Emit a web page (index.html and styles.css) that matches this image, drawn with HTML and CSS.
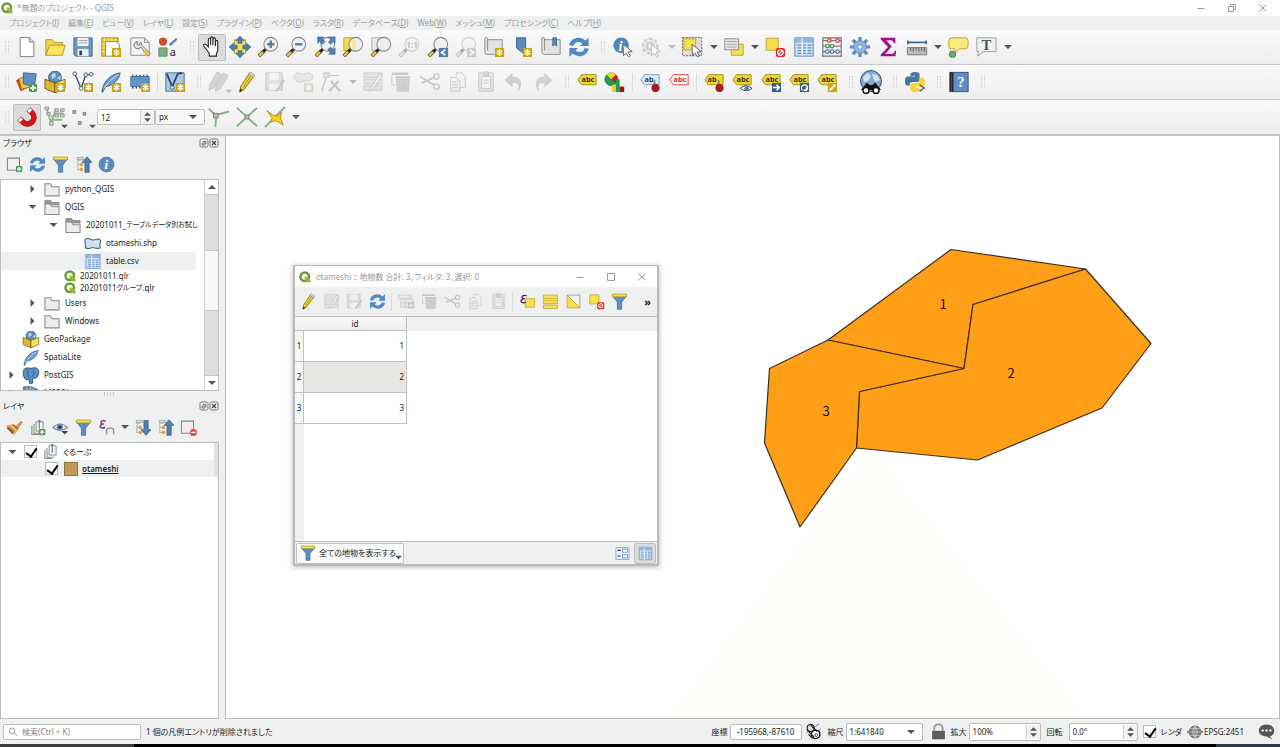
FILE: index.html
```html
<!DOCTYPE html>
<html lang="ja">
<head>
  <meta charset="utf-8">
  <title>*無題のプロジェクト - QGIS</title>
  <meta name="viewport" content="width=device-width, initial-scale=1">
  <link rel="stylesheet" href="styles.css">
</head>
<body>

<!-- icon set -->
<svg class="sprite" aria-hidden="true">
  <defs>
    <g id="star"><rect x="13" y="13" width="10" height="10" rx="1" fill="#c9a40e"/><path d="M18 14.500v7M15 16.200l6 3.600M21 16.200l-6 3.600" stroke="#fff" stroke-width="1.800"/></g>
    <g id="plus"><rect x="14" y="14" width="9" height="9" rx="2" fill="#4c9a55"/><path d="M18.500 15.500v6M15.500 18.500h6" stroke="#fff" stroke-width="2"/></g>
    <g id="lens"><path d="M2 22l6-6" stroke="#555" stroke-width="4"/><path d="M2.500 21.500l4-4" stroke="#f0c93a" stroke-width="2.500"/><path d="M7 17l3-3" stroke="#222" stroke-width="3"/><circle cx="15" cy="9" r="7.500" fill="#eef1ef" fill-opacity=".9" stroke="#888" stroke-width="1.200"/></g>
    <g id="cursor"><path d="M12 9l10 8-4.500.5 2.500 4-2 1.200-2.500-4-3 2.800z" fill="#fff" stroke="#555"/></g>
    <g id="ball"><path d="M17 10v6" stroke="#888" stroke-width="2"/><circle cx="18" cy="18.500" r="4.500" fill="#a31f1f"/></g>
    <g id="no"><rect x="13" y="13" width="10" height="10" rx="2" fill="#e02a2a"/><circle cx="18" cy="18" r="3" fill="none" stroke="#fff" stroke-width="1.300"/><path d="M16 20l4-4" stroke="#fff" stroke-width="1.300"/></g>
    <g id="tag"><path d="M2 9.500L6 4h16v11H6z" fill="#f2d52b" stroke="#a58c12"/></g>
    <g id="sheets"><path d="M10 4h10v13H10z" fill="#f2f2f2" stroke="#888" stroke-width="1.300"/><path d="M7 7v13h10M4 10v12h10" fill="none" stroke="#888" stroke-width="1.500"/><path d="M14.500 1v13M12.500 3h4" stroke="#5580a8" stroke-width="1.600"/></g>
    <g id="treelines"><path d="M4 3v17M4 6h5M4 12h5M4 19h5" stroke="#999" fill="none"/><path d="M3 2h9v3H3z" fill="#ddd" stroke="#999"/><circle cx="9" cy="12" r="2.500" fill="#f29a1c"/><circle cx="9" cy="19" r="2.500" fill="#f29a1c"/></g>
  </defs>
  <symbol id="qgis" viewBox="0 0 24 24"><circle cx="11.500" cy="11.500" r="8.500" fill="none" stroke="#6a9c33" stroke-width="5"/><path d="M12 12h5l6 7v4h-5l-6-6z" fill="#8dbb3c"/><path d="M11 11h5l-1 4-4 1z" fill="#ee9a3a"/></symbol>
  <symbol id="new" viewBox="0 0 24 24"><path d="M4.500 1.500h10l5 5v16h-15z" fill="#fff" stroke="#777"/><path d="M14.500 1.500v5h5" fill="#ddd" stroke="#777"/></symbol>
  <symbol id="open" viewBox="0 0 24 24"><path d="M2 21V4h7l2 3h9v4" fill="#f2d544" stroke="#b5951b"/><path d="M2 21l4-11h17l-3 11z" fill="#fae364" stroke="#b5951b"/></symbol>
  <symbol id="save" viewBox="0 0 24 24"><path d="M2 2h20v20H4l-2-2z" fill="#6b95c0" stroke="#4d6a88"/><path d="M6 2h12v9H6z" fill="#f4f4f4"/><path d="M7.500 5h9M7.500 7.500h9" stroke="#999"/><path d="M6 14h12v8H6z" fill="#eee"/><path d="M8 16h3v5H8z" fill="#444"/></symbol>
  <symbol id="layout" viewBox="0 0 24 24"><path d="M6 5h10l5 4v13H6z" fill="#fff" stroke="#888"/><path d="M2 2h18v4H6v16H2z" fill="#e7c73a" stroke="#a98c1c"/><path d="M5 3v2M9 3v2M13 3v2M17 3v2M3 9h2M3 13h2M3 17h2" stroke="#fff"/><use href="#star"/></symbol>
  <symbol id="manager" viewBox="0 0 24 24"><path d="M2 2h15l5 5v14H2z" fill="#f2f3f3" stroke="#888"/><path d="M17 2v5h5" fill="none" stroke="#888"/><path d="M9 6a4 4 0 1 0 4 6l8 10 2-3-9-9-1-3-2 3-2-1z" fill="#e6e6e6" stroke="#666"/><path d="M16 16l5 5" stroke="#e4bb24" stroke-width="3"/></symbol>
  <symbol id="style" viewBox="0 0 24 24"><circle cx="6.500" cy="6" r="4.500" fill="#cd5024"/><path d="M13 9l8-7 1 2-7 7z" fill="#4f86bd"/><path d="M2 13h9v9H2z" fill="#7fb283" stroke="#5a8a60"/><text x="14" y="22" font-size="12" fill="#222">a</text></symbol>
  <symbol id="hand" viewBox="0 0 24 24"><path d="M9 22v-3l-6-8c-1-2 1-3 2.500-1.500L8 12V4c0-2 2.500-2 2.500 0v6V2.500c0-2 2.500-2 2.500 0V10l.2-6.500c0-2 2.500-2 2.500 0V11l.3-5c0-1.800 2.300-1.800 2.300 0v10l-1.500 3v3z" fill="#fff" stroke="#222" stroke-width="1.200"/></symbol>
  <symbol id="pansel" viewBox="0 0 24 24"><path d="M6 4h12v15H6z" fill="#f6e04c" stroke="#baa02a"/><path d="M12 0l4.500 5H14v3h-4V5H7.500zM12 24l4.500-5H14v-3h-4v3H7.500zM0 12l5-4.500V10h4v4H5v2.500zM24 12l-5-4.500V10h-4v4h4v2.500z" fill="#4c80b5" stroke="#335d85" stroke-width=".6"/></symbol>
  <symbol id="zoomin" viewBox="0 0 24 24"><use href="#lens"/><path d="M15 5v8M11 9h8" stroke="#4c80b5" stroke-width="2.600"/></symbol>
  <symbol id="zoomout" viewBox="0 0 24 24"><use href="#lens"/><path d="M11 9h8" stroke="#4c80b5" stroke-width="2.600"/></symbol>
  <symbol id="full" viewBox="0 0 24 24"><use href="#lens"/><path d="M4 1h7L9 3l3 3-3 3-3-3-2 2zM23 1v7l-2-2-3 3-2-2 2-3-2-3zM23 20h-7l2-2-3-3 3-3 3 3 2-2z" fill="#4c80b5" stroke="#335d85" stroke-width=".6"/></symbol>
  <symbol id="zoomsel" viewBox="0 0 24 24"><path d="M2 2h12v14H2z" fill="#f6e04c" stroke="#baa02a"/><use href="#lens"/><path d="M10 4h5v11h-4z" fill="#f6e8a0"/></symbol>
  <symbol id="zoomlayer" viewBox="0 0 24 24"><path d="M2 2h12v14H2z" fill="#e9ebe9" stroke="#aaa"/><use href="#lens"/></symbol>
  <symbol id="native" viewBox="0 0 24 24"><use href="#lens"/><text x="9" y="13" font-size="9" font-weight="bold" fill="#555">1:1</text></symbol>
  <symbol id="last" viewBox="0 0 24 24"><use href="#lens"/><path d="M13 13h10v10H13z" fill="#4c80b5"/><path d="M20 15l-4 3 4 3" fill="none" stroke="#fff" stroke-width="2"/></symbol>
  <symbol id="next" viewBox="0 0 24 24"><use href="#lens"/><path d="M13 13h10v10H13z" fill="#888"/><path d="M16 15l4 3-4 3" fill="none" stroke="#fff" stroke-width="2"/></symbol>
  <symbol id="mapview" viewBox="0 0 24 24"><path d="M5 4h16v16H4c-2 0-2-3-2-4V3c0-2 3-2 3 0v13" fill="#e2e4e2" stroke="#888"/><use href="#star"/></symbol>
  <symbol id="bookmark" viewBox="0 0 24 24"><path d="M6 2h10v19l-5-4-5-4z" fill="#5b8bbd" stroke="#3f6288"/><use href="#star"/></symbol>
  <symbol id="bookmarks" viewBox="0 0 24 24"><path d="M5 4h17v16H4c-2 0-2-3-2-4V3c0-2 3-2 3 0v13" fill="#e2e4e2" stroke="#888"/><path d="M14 2h4v9l-2-2-2 2z" fill="#5b8bbd" stroke="#3f6288"/></symbol>
  <symbol id="refresh" viewBox="0 0 24 24"><path d="M3.500 10.500C5 4 13 2 18 7M20.500 13.500C19 20 11 22 6 17" fill="none" stroke="#4f88c4" stroke-width="4.500"/><path d="M22.500 1.500v9.500H13zM1.500 22.500V13H11z" fill="#4f88c4"/></symbol>
  <symbol id="info" viewBox="0 0 24 24"><circle cx="10" cy="10" r="8.500" fill="#4f86bd"/><text x="7" y="16" font-family="Liberation Serif" font-style="italic" font-weight="bold" font-size="16" fill="#fff">i</text><use href="#cursor"/></symbol>
  <symbol id="about" viewBox="0 0 24 24"><circle cx="12" cy="12" r="10.500" fill="#5a8cc0" stroke="#41709e"/><text x="9" y="18" font-family="Liberation Serif" font-style="italic" font-weight="bold" font-size="18" fill="#fff">i</text></symbol>
  <symbol id="action" viewBox="0 0 24 24"><circle cx="11" cy="11" r="8" fill="#ddd" stroke="#888" stroke-width="2.500" stroke-dasharray="4 2"/><circle cx="11" cy="11" r="5" fill="#888"/><path d="M9.500 8l5 3-5 3z" fill="#fff"/><use href="#cursor"/></symbol>
  <symbol id="select" viewBox="0 0 24 24"><path d="M1.500 1.500h21v20h-21z" fill="#ddd" stroke="#555" stroke-dasharray="2 1.500"/><path d="M3 3h13v12H3z" fill="#f6e04c" stroke="#baa02a"/><use href="#cursor"/></symbol>
  <symbol id="selform" viewBox="0 0 24 24"><path d="M9 9h13v12H9z" fill="#f6e04c" stroke="#baa02a"/><path d="M2 3h15v12H2z" fill="#e6e8e8" stroke="#888"/><path d="M4 6h11M4 9h11M4 12h11" stroke="#999"/></symbol>
  <symbol id="deselect" viewBox="0 0 24 24"><path d="M2.500 2.500h13v13h-13z" fill="#f6e04c" stroke="#baa02a"/><use href="#no"/></symbol>
  <symbol id="table" viewBox="0 0 24 24"><path d="M2 2h20v20H2z" fill="#cfe0f2" stroke="#7ba3cf" stroke-width="1.500"/><path d="M2 2h20v5H2z" fill="#8db4dc"/><path d="M5 10h4M11 10h3M16 10h4M5 13h4M11 13h3M16 13h4M5 16h4M11 16h3M16 16h4M5 19h4M11 19h3M16 19h4" stroke="#5f8dbd" stroke-width="1.300"/><path d="M10 2v20" stroke="#fff"/></symbol>
  <symbol id="abacus" viewBox="0 0 24 24"><path d="M2 22V2h20v20M2 5h20M2 11h20M2 17h20M1 22h22" fill="none" stroke="#777" stroke-width="1.300"/><g stroke-width="1.300"><g fill="#f7d8d8" stroke="#d33"><circle cx="9" cy="5" r="2"/><circle cx="18" cy="5" r="2"/></g><g fill="#d8f0d8" stroke="#484"><circle cx="7" cy="11" r="2"/><circle cx="12" cy="11" r="2"/></g><g fill="#dde8f5" stroke="#47a"><circle cx="7" cy="17" r="2"/><circle cx="12" cy="17" r="2"/><circle cx="18" cy="17" r="2"/></g></g></symbol>
  <symbol id="gear" viewBox="0 0 24 24"><path d="M12 1v22M1 12h22M4.200 4.200l15.600 15.600M19.800 4.200L4.200 19.800" stroke="#5b8bbd" stroke-width="3.500"/><circle cx="12" cy="12" r="7" fill="#8bb5e2" stroke="#5b8bbd"/><circle cx="12" cy="12" r="2.500" fill="#fff" stroke="#5b8bbd"/></symbol>
  <symbol id="sigma" viewBox="0 0 24 24"><path d="M4 2h16v6h-1.500c-.5-2.500-1.500-3.500-4-3.500H10l6 7-7 8h6.500c2.500 0 3.500-1.500 4-3.500H21l-1 6H4v-1.500L12 12 4 3.500z" fill="#a0108f"/></symbol>
  <symbol id="ruler" viewBox="0 0 24 24"><path d="M2 7h20M2 5v4M22 5v4" stroke="#3f678f" stroke-width="1.800"/><path d="M1.500 12.500h21v8h-21z" fill="#bbb" stroke="#777"/><path d="M5 13v3M8 13v4M11 13v3M14 13v4M17 13v3M20 13v4" stroke="#555"/></symbol>
  <symbol id="tip" viewBox="0 0 24 24"><path d="M5 2h15q3 0 3 3v6q0 3-3 3h-7l-5 6 1-6H5q-3 0-3-3V5q0-3 3-3z" fill="#f9ec7c" stroke="#b79f31"/><circle cx="6" cy="20" r="3.500" fill="#74a578" stroke="#447a4c"/></symbol>
  <symbol id="textann" viewBox="0 0 24 24"><path d="M2 2h21v15H9l-6 5 1-5H2z" fill="#edf3f5" stroke="#999"/><text x="7" y="15" font-family="Liberation Serif" font-weight="bold" font-size="16" fill="#555">T</text></symbol>

  <symbol id="source" viewBox="0 0 24 24"><path d="M0 10l10-5 6 12-11 5z" fill="#c4461c"/><path d="M3 8l11-3 3 12-11 3z" fill="#e9c73a" stroke="#8a6d10" stroke-width=".6"/><path d="M8 2l14 1-2 14-12-3z" fill="#5e8fc4" stroke="#3f6288"/><use href="#plus"/></symbol>
  <symbol id="gpkg" viewBox="0 0 24 24"><circle cx="12" cy="7" r="7" fill="#5f8fb9" stroke="#365b7d"/><path d="M8 4l4-2 1 4-4 3zM14 8l4-3v5z" fill="#b9d3e6"/><path d="M1 9l11 4v11L1 19z" fill="#e0b72b" stroke="#4e3b08" stroke-width=".8"/><path d="M12 13l11-4v10l-11 5z" fill="#f7dd60" stroke="#4e3b08" stroke-width=".8"/></symbol>
  <symbol id="gpkgnew" viewBox="0 0 24 24"><use href="#gpkg"/><use href="#star"/></symbol>
  <symbol id="shpnew" viewBox="0 0 24 24"><path d="M3 3l7 16 5-15h6" fill="none" stroke="#34506c" stroke-width="1.500"/><g fill="#fff" stroke="#34506c"><circle cx="3" cy="3" r="2"/><circle cx="10" cy="19" r="2"/><circle cx="15" cy="4" r="2"/><circle cx="21" cy="3.500" r="2"/></g><use href="#star"/></symbol>
  <symbol id="feather" viewBox="0 0 24 24"><path d="M2 23c1-9 7-19 20-21-1 8-8 14-16 15l-3 6z" fill="#6c9bd0" stroke="#355a80"/><path d="M4 19C9 12 14 7 20 4" stroke="#dceaf7" fill="none"/></symbol>
  <symbol id="feathernew" viewBox="0 0 24 24"><use href="#feather"/><use href="#star"/></symbol>
  <symbol id="chip" viewBox="0 0 24 24"><path d="M4 4v15M8 4v15M12 4v15M16 4v15M20 4v15" stroke="#444" stroke-width="1.500"/><path d="M2 6h20v11H2z" fill="#5f93cc" stroke="#3f6f9f"/><use href="#star"/></symbol>
  <symbol id="virtual" viewBox="0 0 24 24"><path d="M2 2h20v20H2z" fill="#a9c7e6" stroke="#3f678f"/><path d="M3 3l6 14 6-14M15 3l5-1" fill="none" stroke="#2b4a69" stroke-width="2"/><circle cx="9" cy="18" r="2" fill="#fff" stroke="#2b4a69"/><use href="#star"/></symbol>
  <symbol id="edits" viewBox="0 0 24 24"><path d="M1 21l1-6L10 1l5 3-8 14zM8 22l1-6 8-14 5 3-8 14z" fill="#999" stroke="#777"/></symbol>
  <symbol id="pencil" viewBox="0 0 24 24"><path d="M4 23l1-6L15 2l5 3L9 20z" fill="#f1d034" stroke="#7d6712"/><path d="M4 23l.7-4 2.500 1.700z" fill="#222"/><path d="M8 18L17 4" stroke="#a88b1a"/><path d="M14 3.500l1.500-2.500 5 3L19 6.500z" fill="#ddd" stroke="#777" stroke-width=".6"/></symbol>
  <symbol id="savee" viewBox="0 0 24 24"><path d="M2 2h18v19H2z" fill="#bbb" stroke="#777"/><path d="M6 2h10v8H6zM6 14h11v7H6z" fill="#f2f2f2"/><path d="M12 22l9-13 2 2-8 11z" fill="#777"/></symbol>
  <symbol id="addpoly" viewBox="0 0 24 24"><path d="M4 3c4-3 5 1 9 0s8-2 9 2-2 7-6 6-5 2-9 1-7-6-3-9z" fill="#ccc" stroke="#888"/><use href="#star"/></symbol>
  <symbol id="vertex" viewBox="0 0 24 24"><path d="M1 22L6 5h14" fill="none" stroke="#777" stroke-width="1.500"/><path d="M3 2h6v5H3z" fill="#bbb" stroke="#777"/><path d="M9 22l10-11M11 11l10 11" stroke="#777" stroke-width="2.500"/></symbol>
  <symbol id="multi" viewBox="0 0 24 24"><path d="M2 2h20v5H2zM2 9h20v5H2zM2 16h20v5H2z" fill="#cfc8a6" stroke="#888"/><path d="M8 22L19 3l3 2-11 16z" fill="#eee" stroke="#777"/></symbol>
  <symbol id="trash" viewBox="0 0 24 24"><path d="M2 3h18M6 7h16" stroke="#777" stroke-width="2.500"/><path d="M7 9h14l-1 13H8z" fill="#bb8f8a" stroke="#777"/><path d="M11 11v9M14 11v9M17 11v9M2 5v10h4" stroke="#777" fill="none"/></symbol>
  <symbol id="cut" viewBox="0 0 24 24"><path d="M1 6l15 9M3 13l14-6" stroke="#777" stroke-width="2"/><circle cx="19" cy="6" r="3" fill="none" stroke="#777" stroke-width="1.500"/><circle cx="19" cy="17" r="3" fill="none" stroke="#777" stroke-width="1.500"/></symbol>
  <symbol id="copy" viewBox="0 0 24 24"><path d="M10 2h6l4 4v12H10z" fill="#eee" stroke="#777"/><path d="M4 7h6l4 4v11H4z" fill="#eee" stroke="#777"/><path d="M6 12h6M6 15h6M6 18h6" stroke="#777"/></symbol>
  <symbol id="paste" viewBox="0 0 24 24"><path d="M4 2h16v20H4z" fill="#ccc" stroke="#777"/><path d="M7 6h10v13H7z" fill="#f5f5f5" stroke="#777"/><path d="M9 1h6v4H9zM9 10h6M9 13h6" fill="#999" stroke="#777"/></symbol>
  <symbol id="undo" viewBox="0 0 24 24"><path d="M2 10l8-7v4c9-1 12 6 7 14 2-7-2-9-7-8v4z" fill="#a08c78" stroke="#888"/></symbol>
  <symbol id="redo" viewBox="0 0 24 24"><path d="M22 10l-8-7v4C5 6 2 13 7 21c-2-7 2-9 7-8v4z" fill="#8c9a88" stroke="#888"/></symbol>
  <symbol id="label" viewBox="0 0 24 24"><use href="#tag"/><text x="6" y="12" font-size="8" font-weight="bold" fill="#333">abc</text></symbol>
  <symbol id="chart" viewBox="0 0 24 24"><circle cx="8" cy="9" r="7" fill="#1aa14a" stroke="#333" stroke-width=".6"/><path d="M8 9L3 4a7 7 0 0 1 10 0z" fill="#f2d52b"/><path d="M8 9l5-5a7 7 0 0 1 0 10z" fill="#d11f1f"/><path d="M9 15h4v8H9z" fill="#f2c92b"/><path d="M13 9h4v14h-4z" fill="#1aa14a"/><path d="M17 17h5v6h-5z" fill="#a31616"/></symbol>
  <symbol id="labelpin" viewBox="0 0 24 24"><path d="M2 9.500L6 4h16v11H6z" fill="#dceafa" stroke="#6d9bd0"/><text x="6" y="12" font-size="8" font-weight="bold" fill="#345">ab</text><use href="#ball"/></symbol>
  <symbol id="labelred" viewBox="0 0 24 24"><path d="M2 9.500L6 4h16v11H6z" fill="#fff" stroke="#e33"/><text x="6" y="12" font-size="8" font-weight="bold" fill="#d22">abc</text></symbol>
  <symbol id="labelball" viewBox="0 0 24 24"><use href="#tag"/><text x="5" y="12" font-size="8" font-weight="bold" fill="#333">ab</text><use href="#ball"/></symbol>
  <symbol id="labeleye" viewBox="0 0 24 24"><use href="#label"/><path d="M10 19q6-6 13 0-6 5-13 0z" fill="#fff" stroke="#333"/><circle cx="17" cy="19" r="2.500" fill="#4c80b5"/></symbol>
  <symbol id="labelmove" viewBox="0 0 24 24"><use href="#label"/><path d="M13 13h10v10H13z" fill="#3e5f80"/><path d="M14 18h7M18 15l3 3-3 3" fill="none" stroke="#fff" stroke-width="1.800"/></symbol>
  <symbol id="labelrot" viewBox="0 0 24 24"><use href="#label"/><path d="M13 13h10v10H13z" fill="#3e5f80"/><path d="M16 21a3.300 3.300 0 1 1 4 0M20 18v3h-3" fill="none" stroke="#fff" stroke-width="1.400"/></symbol>
  <symbol id="labeledit" viewBox="0 0 24 24"><use href="#label"/><path d="M13 13h10v10H13z" fill="#d0a811"/><path d="M15 21l6-6" stroke="#fff" stroke-width="2"/></symbol>
  <symbol id="search" viewBox="0 0 24 24"><circle cx="12" cy="11" r="10.500" fill="#86aace" stroke="#34506c"/><path d="M4 7l5-4 3 3-3 5-4 1zM13 4l5 1 3 5-5 2z" fill="#d5e3ec"/><path d="M8 14l2 2h4l2-2 4 5H4z" fill="#111" stroke="#111" stroke-width="2"/><g fill="#fff" stroke="#111" stroke-width="1.500"><circle cx="7" cy="20.500" r="3"/><circle cx="17" cy="20.500" r="3"/></g></symbol>
  <symbol id="python" viewBox="0 0 24 24"><path d="M7 6V4q0-3 5-3t5 3v5q0 3-3 3H9q-3 0-3 4H4q-3 0-3-5t3-5h8V5z" fill="#4477a6"/><path d="M17 7h2q4 0 4 5t-3 5h-8v1h5v2q0 3-5 3t-5-3v-4q0-3 3-3h5q2 0 2-3z" fill="#f5d437"/><path d="M17 15l5 3.500-5 3.500" fill="none" stroke="#555" stroke-width="1.500"/></symbol>
  <symbol id="help" viewBox="0 0 24 24"><path d="M2 1.500h20v21H2z" fill="#5f8fc6" stroke="#34506c"/><path d="M2 1.500h4v21H2z" fill="#222"/><path d="M4 3v19" stroke="#999" stroke-dasharray="1 1"/><text x="10" y="17" font-family="Liberation Serif" font-weight="bold" font-size="16" fill="#fff">?</text></symbol>

  <symbol id="magnet" viewBox="0 0 24 24"><path d="M3.500 13.500l4 4a7 7 0 0 0 10-10l-4-4" fill="none" stroke="#8d0f0f" stroke-width="6"/><path d="M4 14l3.500 3.500a7 7 0 0 0 10-10L14 4" fill="none" stroke="#d81515" stroke-width="5"/><path d="M3.800 13.800l2.200 2.200M13.800 3.800l2.200 2.200" stroke="#fff" stroke-width="4.500"/></symbol>
  <symbol id="snapmode" viewBox="0 0 24 24"><path d="M3 3l5 16 5-16M8 12l5-4h8M8 15h12" fill="none" stroke="#8bb88d" stroke-width="2"/><g fill="#ccc" stroke="#888" stroke-width=".8"><path d="M1 1h4v3H1zM3 7h4v3H3zM12 3h4v3h-4zM18 3h4v3h-4zM12 9h4v3h-4zM18 9h4v3h-4zM6 17h4v4H6z"/></g></symbol>
  <symbol id="snaptype" viewBox="0 0 24 24"><path d="M1 5h3v3H1zM12 7h3v3h-3zM7 17h3v3H7z" fill="#bbb" stroke="#777"/></symbol>
  <symbol id="topo" viewBox="0 0 24 24"><path d="M1 3l7 7 15-4M9 10l-1 13" fill="none" stroke="#7cb582" stroke-width="2"/><path d="M6 8h5v5H6z" fill="#bbb" stroke="#777"/></symbol>
  <symbol id="inter" viewBox="0 0 24 24"><path d="M1 2l22 20M23 2L1 22" stroke="#7cb582" stroke-width="2"/><path d="M10 10h4v4h-4z" fill="#bbb" stroke="#777"/></symbol>
  <symbol id="trace" viewBox="0 0 24 24"><path d="M23 1L1 23" stroke="#7cb582" stroke-width="2"/><path d="M3 5l7 5 4 1 5-4-1 6 3 8-6-4-3-1-5 2 2-5z" fill="#f5cf21" stroke="#b58b0e"/></symbol>

  <symbol id="adddoc" viewBox="0 0 24 24"><path d="M2 3h17v17H2z" fill="#f0f0f0" stroke="#888" stroke-width="1.500"/><use href="#plus"/></symbol>
  <symbol id="remdoc" viewBox="0 0 24 24"><path d="M2 3h17v17H2z" fill="#f0f0f0" stroke="#888" stroke-width="1.500"/><circle cx="19" cy="19" r="5" fill="#ea4545"/><path d="M16 19h6" stroke="#fff" stroke-width="2"/></symbol>
  <symbol id="filter" viewBox="0 0 24 24"><path d="M2 4h20l-7 9v10H9V13z" fill="#5b8fc6" stroke="#3f6a96"/><path d="M2 1.500h20v4H2z" fill="#f6e04c" stroke="#a3902a"/></symbol>
  <symbol id="collapse" viewBox="0 0 24 24"><use href="#treelines"/><path d="M17 1l7 8h-4v14h-6V9h-4z" fill="#4c80b5" stroke="#335d85"/></symbol>
  <symbol id="expand" viewBox="0 0 24 24"><use href="#treelines"/><path d="M17 23l7-8h-4V2h-6v13h-4z" fill="#4c80b5" stroke="#335d85"/></symbol>
  <symbol id="folder" viewBox="0 0 24 24"><path d="M2 21V4h8l2 4h10v13z" fill="#ededed" stroke="#8a8a8a" stroke-width="1.500"/></symbol>
  <symbol id="folderopen" viewBox="0 0 24 24"><path d="M2 9V2h8l2 3h10v4" fill="#999" stroke="#777"/><path d="M2 22V7h8l2 4h10v11z" fill="#ededed" stroke="#8a8a8a" stroke-width="1.500"/></symbol>
  <symbol id="poly" viewBox="0 0 24 24"><path d="M3 5c5-1 6 3 10 2s6-3 9 0-2 5 0 9-6 3-9 2-4 1-9 1-2-6-3-8 0-5 2-6z" fill="#cfe0f0" stroke="#3f5f80" stroke-width="1.500"/></symbol>
  <symbol id="elephant" viewBox="0 0 24 24"><path d="M1 8C1 0 8 1 12 2c6-2 11-1 11 5 0 4-2 7-4 9l-4-1-1 8h-4l-1-6-4 1C2 16 1 12 1 8z" fill="#5b8fc6" stroke="#2e4d6e" stroke-width="1.300"/><path d="M8 4q-2 5 1 11M15 4q3 4-1 9" fill="none" stroke="#2e4d6e"/></symbol>
  <symbol id="mssql" viewBox="0 0 24 24"><path d="M1 3c8-2 14 0 21 4l-4 16H5z" fill="#5b8fc6" stroke="#2e4d6e"/><path d="M6 3l3 19M11 3l2 19M16 5l1 17" stroke="#dceaf7"/></symbol>
  <symbol id="brush" viewBox="0 0 24 24"><path d="M13 12l8-9 2 2-7 9z" fill="#e09a28" stroke="#a86"/><path d="M1 10l8-2 8 7-6 7z" fill="#f0c22e" stroke="#b85"/><path d="M2 12l8 8" stroke="#d43030" stroke-width="3"/><path d="M10 8l7 6" stroke="#c33" stroke-width="2"/><path d="M5 12l7 6" stroke="#4c80b5" stroke-width="1.500"/></symbol>
  <symbol id="group" viewBox="0 0 24 24"><use href="#sheets"/></symbol>
  <symbol id="groupadd" viewBox="0 0 24 24"><use href="#sheets"/><use href="#plus"/></symbol>
  <symbol id="eye" viewBox="0 0 24 24"><path d="M1 12Q11 2 22 12 11 20 1 12z" fill="#eef3f6" stroke="#889" stroke-width="1.500"/><circle cx="11" cy="11.500" r="4.500" fill="#5b8fc6"/><circle cx="11" cy="11.500" r="2" fill="#223"/><path d="M13 17h10l-5 5z" fill="#444"/></symbol>
  <symbol id="epsfilter" viewBox="0 0 24 24"><path d="M11 3C3 0 2 8 8 7 0 8 2 15 10 12" fill="none" stroke="#74386d" stroke-width="2"/><path d="M12 22v-6q0-3 3-3h4q3 0 3 3v6M12 19v3M22 19v3" fill="none" stroke="#999" stroke-width="2"/></symbol>
  <symbol id="epssel" viewBox="0 0 24 24"><path d="M9 8h13v12H9z" fill="#f6e04c" stroke="#baa02a"/><path d="M11 4C3 1 2 9 8 8 0 9 2 16 10 13" fill="none" stroke="#522a58" stroke-width="2"/></symbol>
  <symbol id="selall" viewBox="0 0 24 24"><path d="M2 3h20v5H2zM2 10h20v5H2zM2 17h20v5H2z" fill="#f6e04c" stroke="#baa02a"/></symbol>
  <symbol id="invert" viewBox="0 0 24 24"><path d="M3 3h18v18z" fill="#f2f2f2" stroke="#888"/><path d="M3 3l18 18H3z" fill="#f6e04c" stroke="#baa02a"/></symbol>
  <symbol id="addfield" viewBox="0 0 24 24"><path d="M1 3h18v5H1zM4 8h17v12H4zM4 14h17M10 8v12" fill="#ddd" stroke="#777"/><path d="M14 13h9v9h-9z" fill="#777"/><path d="M18.500 15v5M16 17.500h5" stroke="#fff" stroke-width="1.500"/></symbol>
  <symbol id="formview" viewBox="0 0 24 24"><path d="M1.500 2.500h21v19h-21z" fill="#e8f0f8" stroke="#8aaed4" stroke-width="1.500"/><path d="M4 7h5M4 16h5" stroke="#345" stroke-width="1.800"/><path d="M12 5h8v5h-8zM12 14h8v5h-8z" fill="#fff" stroke="#6d9bd0" stroke-width="1.500"/></symbol>
  <symbol id="extent" viewBox="0 0 24 24"><path d="M2 14L20 1M9 23L22 8" stroke="#555"/><circle cx="8" cy="7" r="5" fill="#ddd" stroke="#111" stroke-width="1.500"/><circle cx="15" cy="16" r="6" fill="#fff" stroke="#111" stroke-width="2"/><circle cx="16" cy="17" r="2" fill="none" stroke="#111"/><path d="M3 10l10 10M8 3l9 9M5 16l5 5" stroke="#111" stroke-width="1.500"/></symbol>
  <symbol id="lock" viewBox="0 0 24 24"><path d="M6 11V8q0-6 6-6t6 6v3" fill="none" stroke="#999" stroke-width="2.500"/><path d="M3 11h18v12H3z" fill="#5c5c5c"/></symbol>
  <symbol id="globe" viewBox="0 0 24 24"><circle cx="12" cy="12" r="9" fill="#777" stroke="#666" stroke-width="1.500"/><path d="M0 12h24M4 7h16M4 17h16M12 2v20M12 3q-7 9 0 18M12 3q7 9 0 18" fill="none" stroke="#ddd"/><path d="M0 12h3M21 12h3" stroke="#666" stroke-width="2"/></symbol>
  <symbol id="chat" viewBox="0 0 24 24"><path d="M12 2c14 0 14 17 3 17h2l3 4-8-4C-3 19-2 2 12 2z" fill="#555"/><path d="M5 9h3v3H5zM10.500 9h3v3h-3zM16 9h3v3h-3z" fill="#fff"/></symbol>
  <symbol id="glass" viewBox="0 0 24 24"><circle cx="10" cy="9" r="6.500" fill="none" stroke="#888" stroke-width="2"/><path d="M15 14l7 8" stroke="#888" stroke-width="2"/></symbol>
  <symbol id="down" viewBox="0 0 8 8"><path d="M0 2h8L4 6z" fill="#555"/></symbol>
  <symbol id="right" viewBox="0 0 8 8"><path d="M2 0v8l4-4z" fill="#555"/></symbol>
  <symbol id="up" viewBox="0 0 8 8"><path d="M0 6h8L4 2z" fill="#555"/></symbol>
  <symbol id="updown" viewBox="0 0 8 12"><path d="M0 4.500h8L4 .5zM0 7.500h8l-4 4z" fill="#555"/></symbol>
  <symbol id="float" viewBox="0 0 10 10"><rect x="1" y="1" width="8" height="8" rx="1.500" fill="none" stroke="#777"/><path d="M3 5h3v2H3zM4 3.500h3V6" fill="none" stroke="#555" stroke-width=".8"/></symbol>
  <symbol id="closebox" viewBox="0 0 10 10"><rect x="1" y="1" width="8" height="8" rx="1.500" fill="none" stroke="#777"/><path d="M3 3l4 4M7 3L3 7" stroke="#444" stroke-width="1.300"/></symbol>
  <symbol id="min" viewBox="0 0 10 10"><path d="M1.500 5.500h7" stroke="#999"/></symbol>
  <symbol id="max" viewBox="0 0 10 10"><path d="M1.500 1.500h7v7h-7z" fill="none" stroke="#999"/></symbol>
  <symbol id="restore" viewBox="0 0 10 10"><path d="M1.500 3.500h5v5h-5zM3.500 3.500v-2h5v5h-2" fill="none" stroke="#999"/></symbol>
  <symbol id="close" viewBox="0 0 10 10"><path d="M1.500 1.500l7 7M8.500 1.500l-7 7" stroke="#999"/></symbol>
</svg>

<div class="app">
  <header class="titlebar">
    <svg class="logo"><use href="#qgis"/></svg>
    <span class="title">*無題のプロジェクト - QGIS</span>
    <div class="winbtns">
      <button aria-label="最小化"><svg><use href="#min"/></svg></button>
      <button aria-label="元に戻す"><svg><use href="#restore"/></svg></button>
      <button aria-label="閉じる"><svg><use href="#close"/></svg></button>
    </div>
  </header>

  <nav class="menubar">
    <button>プロジェクト(<u>J</u>)</button>
    <button>編集(<u>E</u>)</button>
    <button>ビュー(<u>V</u>)</button>
    <button>レイヤ(<u>L</u>)</button>
    <button>設定(<u>S</u>)</button>
    <button>プラグイン(<u>P</u>)</button>
    <button>ベクタ(<u>O</u>)</button>
    <button>ラスタ(<u>R</u>)</button>
    <button>データベース(<u>D</u>)</button>
    <button>Web(<u>W</u>)</button>
    <button>メッシュ(<u>M</u>)</button>
    <button>プロセシング(<u>C</u>)</button>
    <button>ヘルプ(<u>H</u>)</button>
  </nav>

  <div class="toolbar">
    <i class="grip"></i>
    <div class="tools">
      <button class="tb"><svg><use href="#new"/></svg></button>
      <button class="tb"><svg><use href="#open"/></svg></button>
      <button class="tb"><svg><use href="#save"/></svg></button>
      <button class="tb"><svg><use href="#layout"/></svg></button>
      <button class="tb"><svg><use href="#manager"/></svg></button>
      <button class="tb"><svg><use href="#style"/></svg></button>
    </div>
    <i class="grip"></i>
    <div class="tools">
      <button class="tb active"><svg><use href="#hand"/></svg></button>
      <button class="tb"><svg><use href="#pansel"/></svg></button>
      <button class="tb"><svg><use href="#zoomin"/></svg></button>
      <button class="tb"><svg><use href="#zoomout"/></svg></button>
      <button class="tb"><svg><use href="#full"/></svg></button>
      <button class="tb"><svg><use href="#zoomsel"/></svg></button>
      <button class="tb"><svg><use href="#zoomlayer"/></svg></button>
      <button class="tb" disabled><svg><use href="#native"/></svg></button>
      <button class="tb"><svg><use href="#last"/></svg></button>
      <button class="tb" disabled><svg><use href="#next"/></svg></button>
      <button class="tb"><svg><use href="#mapview"/></svg></button>
      <button class="tb"><svg><use href="#bookmark"/></svg></button>
      <button class="tb"><svg><use href="#bookmarks"/></svg></button>
      <button class="tb"><svg><use href="#refresh"/></svg></button>
    </div>
    <i class="grip"></i>
    <div class="tools">
      <button class="tb"><svg><use href="#info"/></svg></button>
      <button class="tb" disabled><svg><use href="#action"/></svg></button>
      <button class="drop" disabled><svg><use href="#down"/></svg></button>
      <button class="tb"><svg><use href="#select"/></svg></button>
      <button class="drop"><svg><use href="#down"/></svg></button>
      <button class="tb"><svg><use href="#selform"/></svg></button>
      <button class="drop"><svg><use href="#down"/></svg></button>
      <button class="tb"><svg><use href="#deselect"/></svg></button>
      <button class="tb"><svg><use href="#table"/></svg></button>
      <button class="tb"><svg><use href="#abacus"/></svg></button>
      <button class="tb"><svg><use href="#gear"/></svg></button>
      <button class="tb"><svg><use href="#sigma"/></svg></button>
      <button class="tb"><svg><use href="#ruler"/></svg></button>
      <button class="drop"><svg><use href="#down"/></svg></button>
      <button class="tb"><svg><use href="#tip"/></svg></button>
      <button class="tb"><svg><use href="#textann"/></svg></button>
      <button class="drop"><svg><use href="#down"/></svg></button>
    </div>
  </div>

  <div class="toolbar">
    <i class="grip"></i>
    <div class="tools">
      <button class="tb"><svg><use href="#source"/></svg></button>
      <button class="tb"><svg><use href="#gpkgnew"/></svg></button>
      <button class="tb"><svg><use href="#shpnew"/></svg></button>
      <button class="tb"><svg><use href="#feathernew"/></svg></button>
      <button class="tb"><svg><use href="#chip"/></svg></button>
      <i class="sep"></i>
      <button class="tb"><svg><use href="#virtual"/></svg></button>
    </div>
    <i class="grip"></i>
    <div class="tools">
      <button class="tb menu" disabled><svg><use href="#edits"/></svg><svg class="corner"><use href="#down"/></svg></button>
      <button class="tb"><svg><use href="#pencil"/></svg></button>
      <button class="tb" disabled><svg><use href="#savee"/></svg></button>
      <button class="tb" disabled><svg><use href="#addpoly"/></svg></button>
      <button class="tb" disabled><svg><use href="#vertex"/></svg></button>
      <button class="drop" disabled><svg><use href="#down"/></svg></button>
      <button class="tb" disabled><svg><use href="#multi"/></svg></button>
      <button class="tb" disabled><svg><use href="#trash"/></svg></button>
      <button class="tb" disabled><svg><use href="#cut"/></svg></button>
      <button class="tb" disabled><svg><use href="#copy"/></svg></button>
      <button class="tb" disabled><svg><use href="#paste"/></svg></button>
      <button class="tb" disabled><svg><use href="#undo"/></svg></button>
      <button class="tb" disabled><svg><use href="#redo"/></svg></button>
    </div>
    <i class="grip"></i>
    <div class="tools">
      <button class="tb"><svg><use href="#label"/></svg></button>
      <button class="tb"><svg><use href="#chart"/></svg></button>
      <i class="sep"></i>
      <button class="tb"><svg><use href="#labelpin"/></svg></button>
      <button class="tb"><svg><use href="#labelred"/></svg></button>
      <i class="sep"></i>
      <button class="tb"><svg><use href="#labelball"/></svg></button>
      <button class="tb"><svg><use href="#labeleye"/></svg></button>
      <button class="tb"><svg><use href="#labelmove"/></svg></button>
      <button class="tb"><svg><use href="#labelrot"/></svg></button>
      <button class="tb"><svg><use href="#labeledit"/></svg></button>
    </div>
    <i class="grip"></i>
    <button class="tb"><svg class="big"><use href="#search"/></svg></button>
    <i class="grip"></i>
    <button class="tb"><svg><use href="#python"/></svg></button>
    <i class="grip"></i>
    <button class="tb"><svg><use href="#help"/></svg></button>
    <i class="grip"></i>
  </div>

  <div class="toolbar snapping">
    <i class="grip"></i>
    <button class="tb active"><svg><use href="#magnet"/></svg></button>
    <button class="tb menu"><svg><use href="#snapmode"/></svg><svg class="corner"><use href="#down"/></svg></button>
    <button class="tb menu"><svg><use href="#snaptype"/></svg><svg class="corner"><use href="#down"/></svg></button>
    <span class="spin tolerance"><input type="text" value="12" aria-label="許容範囲"><svg><use href="#updown"/></svg></span>
    <span class="combo unit"><select aria-label="単位"><option>px</option></select><svg><use href="#down"/></svg></span>
    <button class="tb"><svg><use href="#topo"/></svg></button>
    <button class="tb"><svg><use href="#inter"/></svg></button>
    <button class="tb"><svg><use href="#trace"/></svg></button>
    <button class="drop"><svg><use href="#down"/></svg></button>
  </div>

  <main class="workspace">
    <aside class="docks">
      <section class="dock browser">
        <div class="dock-title"><h2>ブラウザ</h2><button><svg><use href="#float"/></svg></button><button><svg><use href="#closebox"/></svg></button></div>
        <div class="dock-tools">
          <button class="db"><svg><use href="#adddoc"/></svg></button>
          <button class="db"><svg><use href="#refresh"/></svg></button>
          <button class="db"><svg><use href="#filter"/></svg></button>
          <button class="db"><svg><use href="#collapse"/></svg></button>
          <button class="db"><svg><use href="#about"/></svg></button>
        </div>
        <div class="tree-box">
          <ul class="tree">
            <li class="l1"><svg class="arr"><use href="#right"/></svg><svg class="ico"><use href="#folder"/></svg>python_QGIS</li>
            <li class="l1"><svg class="arr"><use href="#down"/></svg><svg class="ico"><use href="#folderopen"/></svg>QGIS</li>
            <li class="l2"><svg class="arr"><use href="#down"/></svg><svg class="ico"><use href="#folderopen"/></svg>20201011_<span class="kana">テーブルデータ別お試し</span></li>
            <li class="l3"><span class="arr"></span><svg class="ico"><use href="#poly"/></svg>otameshi.shp</li>
            <li class="l3 selected"><span class="arr"></span><svg class="ico"><use href="#table"/></svg>table.csv</li>
            <li class="l2 file"><span class="arr"></span><svg class="ico"><use href="#qgis"/></svg>20201011.qlr</li>
            <li class="l2 file"><span class="arr"></span><svg class="ico"><use href="#qgis"/></svg>20201011<span class="kana">グループ</span>.qlr</li>
            <li class="l1"><svg class="arr"><use href="#right"/></svg><svg class="ico"><use href="#folder"/></svg>Users</li>
            <li class="l1"><svg class="arr"><use href="#right"/></svg><svg class="ico"><use href="#folder"/></svg>Windows</li>
            <li><span class="arr"></span><svg class="ico"><use href="#gpkg"/></svg>GeoPackage</li>
            <li><span class="arr"></span><svg class="ico"><use href="#feather"/></svg>SpatiaLite</li>
            <li><svg class="arr"><use href="#right"/></svg><svg class="ico"><use href="#elephant"/></svg>PostGIS</li>
            <li><svg class="arr"><use href="#right"/></svg><svg class="ico"><use href="#mssql"/></svg>MSSQL</li>
          </ul>
          <div class="scrollbar">
            <button><svg><use href="#up"/></svg></button>
            <div class="track"><div class="thumb"></div></div>
            <button><svg><use href="#down"/></svg></button>
          </div>
        </div>
      </section>
      <div class="splitter"></div>
      <section class="dock layers">
        <div class="dock-title"><h2>レイヤ</h2><button><svg><use href="#float"/></svg></button><button><svg><use href="#closebox"/></svg></button></div>
        <div class="dock-tools">
          <button class="db"><svg><use href="#brush"/></svg></button>
          <button class="db"><svg><use href="#groupadd"/></svg></button>
          <button class="db"><svg><use href="#eye"/></svg></button>
          <button class="db"><svg><use href="#filter"/></svg></button>
          <button class="db"><svg><use href="#epsfilter"/></svg></button>
          <button class="drop"><svg><use href="#down"/></svg></button>
          <button class="db"><svg><use href="#expand"/></svg></button>
          <button class="db"><svg><use href="#collapse"/></svg></button>
          <button class="db"><svg><use href="#remdoc"/></svg></button>
        </div>
        <ul class="tree layer-tree">
          <li><svg class="arr"><use href="#down"/></svg><label><input type="checkbox" class="check" checked><svg class="ico"><use href="#group"/></svg>ぐるーぷ</label></li>
          <li class="l1 selected"><span class="arr"></span><label><input type="checkbox" class="check" checked><span class="swatch"></span><b>otameshi</b></label></li>
        </ul>
      </section>
    </aside>

    <div class="map">
      <svg class="canvas">
        <path d="M646 319L446 583h410z" fill="#fefff9"/>
        <g fill="#ff9e17" stroke="#3a3020" stroke-width="1.200" stroke-linejoin="round">
          <path d="M602 204L725 113.500 859.500 133 747 168.500 738 232.500z"/>
          <path d="M859.500 133L925 207.500 876 272 751.500 324 630.500 312 633.500 255.500 738 232.500 747 168.500z"/>
          <path d="M602 204L543.500 232.500 538.500 307 574 391 630.500 312 633.500 255.500 738 232.500z"/>
        </g>
        <g class="map-label">
          <text x="717" y="173">1</text>
          <text x="785" y="242">2</text>
          <text x="600" y="280">3</text>
        </g>
      </svg>

      <section class="window">
        <header class="window-title">
          <svg class="logo"><use href="#qgis"/></svg>
          <span class="title">otameshi :: 地物数 合計: 3、フィルタ: 3、選択: 0</span>
          <div class="winbtns">
            <button aria-label="最小化"><svg><use href="#min"/></svg></button>
            <button aria-label="最大化"><svg><use href="#max"/></svg></button>
            <button aria-label="閉じる"><svg><use href="#close"/></svg></button>
          </div>
        </header>
        <div class="window-tools">
          <button class="db"><svg><use href="#pencil"/></svg></button>
          <button class="db" disabled><svg><use href="#multi"/></svg></button>
          <button class="db" disabled><svg><use href="#savee"/></svg></button>
          <button class="db"><svg><use href="#refresh"/></svg></button>
          <i class="sep"></i>
          <button class="db" disabled><svg><use href="#addfield"/></svg></button>
          <button class="db" disabled><svg><use href="#trash"/></svg></button>
          <button class="db" disabled><svg><use href="#cut"/></svg></button>
          <button class="db" disabled><svg><use href="#copy"/></svg></button>
          <button class="db" disabled><svg><use href="#paste"/></svg></button>
          <i class="sep"></i>
          <button class="db"><svg><use href="#epssel"/></svg></button>
          <button class="db"><svg><use href="#selall"/></svg></button>
          <button class="db"><svg><use href="#invert"/></svg></button>
          <button class="db"><svg><use href="#deselect"/></svg></button>
          <button class="db"><svg><use href="#filter"/></svg></button>
          <button class="more">»</button>
        </div>
        <div class="grid-box">
          <table class="grid">
            <colgroup><col class="num"><col></colgroup>
            <thead><tr><th class="blank"></th><th>id</th></tr></thead>
            <tbody>
              <tr><th>1</th><td>1</td></tr>
              <tr class="alt"><th>2</th><td>2</td></tr>
              <tr><th>3</th><td>3</td></tr>
            </tbody>
          </table>
        </div>
        <footer class="window-foot">
          <button class="filter-btn"><svg><use href="#filter"/></svg>全ての地物を表示する<svg class="tri"><use href="#down"/></svg></button>
          <button class="view"><svg><use href="#formview"/></svg></button>
          <button class="view active"><svg><use href="#table"/></svg></button>
        </footer>
      </section>
    </div>
  </main>

  <footer class="status">
    <label class="locator"><svg><use href="#glass"/></svg><input type="text" placeholder="検索(Ctrl + K)"></label>
    <span class="message">1 個の凡例エントリが削除されました</span>
    <label for="coord">座標</label>
    <input id="coord" class="coord" type="text" value="-195968,-87610">
    <button class="sb"><svg><use href="#extent"/></svg></button>
    <label for="scale">縮尺</label>
    <span class="combo scale"><select id="scale"><option>1:641840</option></select><svg><use href="#down"/></svg></span>
    <button class="sb lock"><svg><use href="#lock"/></svg></button>
    <label for="zoom">拡大</label>
    <span class="spin zoom"><input id="zoom" type="text" value="100%"><svg><use href="#updown"/></svg></span>
    <label for="rot">回転</label>
    <span class="spin rot"><input id="rot" type="text" value="0.0°"><svg><use href="#updown"/></svg></span>
    <label class="render"><input type="checkbox" class="check" checked>レンダ</label>
    <button class="crs"><svg><use href="#globe"/></svg>EPSG:2451</button>
    <button class="sb"><svg><use href="#chat"/></svg></button>
  </footer>
  <div class="taskbar"></div>
</div>

</body>
</html>
```

FILE: styles.css
```css
* {
  box-sizing: border-box;
}

html, body {
  margin: 0;
  padding: 0;
  height: 100%;
}

body {
  font-family: "Noto Sans", "Noto Sans CJK JP", sans-serif;
  font-size: 8px;
  line-height: 12px;
  font-feature-settings: "palt";
  color: #222;
  background: #eff0f0;
  overflow: hidden;
}

button, input, select {
  font: inherit;
  font-feature-settings: inherit;
  color: inherit;
  margin: 0;
  padding: 0;
  border: none;
  background: none;
  outline: none;
}

h2, ul {
  margin: 0;
  padding: 0;
  font-size: 8px;
  font-weight: normal;
  list-style: none;
}

svg {
  display: block;
  flex: none;
}

.sprite {
  display: none;
}

.app {
  display: flex;
  flex-direction: column;
  height: 100vh;
}

/* title bars */
.titlebar, .window-title {
  display: flex;
  align-items: center;
  background: #fff;
  color: #999;
}

.titlebar {
  height: 16px;
  padding-left: 1px;
  padding-right: 2px;
  gap: 4px;
}

.logo {
  width: 12px;
  height: 12px;
}

.title {
  flex: 1;
  white-space: nowrap;
}

.winbtns {
  display: flex;
}

.winbtns button {
  width: 31px;
  display: flex;
  justify-content: center;
}

.winbtns svg {
  width: 10px;
  height: 10px;
}

.menubar {
  display: flex;
  gap: 9px;
  height: 14px;
  padding-left: 9px;
  color: #a0a0a0;
}

.menubar button {
  white-space: nowrap;
}

/* toolbars */
.toolbar {
  display: flex;
  align-items: center;
  height: 35px;
  padding-left: 5px;
  border-bottom: 1px solid #c6c6c6;
  background: linear-gradient(#fafafa, #eeeeee);
}

.snapping {
  height: 36px;
  border-bottom: 2px solid #c4c4c4;
}

.tools {
  display: flex;
  align-items: center;
}

.tools > :nth-child(4n) {
  margin-right: 1px;
}

.grip {
  width: 4px;
  height: 12px;
  margin: 0 4px 0 8px;
  border: dotted #d0d0d0;
  border-width: 0 1px;
}

.grip:first-child {
  margin-left: 0;
}

.sep {
  width: 1px;
  height: 18px;
  margin: 0 3px;
  background: #d9d9d9;
}

.tb {
  width: 28px;
  height: 27px;
  display: flex;
  align-items: center;
  justify-content: center;
  position: relative;
}

.tb svg {
  width: 22px;
  height: 22px;
}

.tb svg.big {
  width: 24px;
  height: 24px;
}

.tb .corner {
  position: absolute;
  right: 1px;
  bottom: 1px;
  width: 7px;
  height: 7px;
}

.active {
  background: #dcdcdc;
  border: 1px solid #bdbdbd;
  border-radius: 2px;
}

button:disabled {
  opacity: .35;
  filter: grayscale(.8);
}

.drop {
  width: 13px;
  display: flex;
  justify-content: center;
}

.drop svg {
  width: 8px;
  height: 8px;
}

/* fields */
.spin, .combo, .coord, .locator {
  display: flex;
  align-items: center;
  height: 16px;
  background: #fff;
  border: 1px solid #bbb;
  border-radius: 2px;
}

.spin input, .combo select {
  flex: 1;
  min-width: 0;
  height: 14px;
  padding: 0 3px;
}

.combo select {
  appearance: none;
}

.spin svg {
  width: 14px;
  height: 14px;
  padding: 1px 3px;
  border-left: 1px solid #ccc;
  background: #f2f2f2;
}

.combo svg {
  width: 8px;
  height: 8px;
  margin: 0 7px;
}

.tolerance {
  width: 58px;
}

.unit {
  width: 50px;
}

.unit, .unit select {
  background: #f8f8f8;
}

.check {
  appearance: none;
  flex: none;
  width: 13px;
  height: 13px;
  background: #fff;
  border: 1px solid #bbb;
}

.check:checked::before {
  content: "";
  display: block;
  width: 5px;
  height: 9px;
  margin: 0 3px;
  border: solid #000;
  border-width: 0 2px 2px 0;
  transform: rotate(35deg);
}

/* left docks */
.workspace {
  flex: 1;
  display: flex;
  min-height: 0;
}

.docks {
  width: 219px;
  display: flex;
  flex-direction: column;
}

.layers {
  flex: 1;
  display: flex;
  flex-direction: column;
}

.dock-title {
  display: flex;
  align-items: center;
  height: 13px;
  padding-left: 3px;
}

.dock-title h2 {
  flex: 1;
}

.dock-title button {
  width: 10px;
}

.dock-title svg {
  width: 10px;
  height: 10px;
}

.dock-tools {
  display: flex;
  align-items: center;
  height: 30px;
  padding-left: 3px;
}

.db {
  width: 23px;
  height: 22px;
  display: flex;
  align-items: center;
  justify-content: center;
}

.db svg {
  width: 17px;
  height: 17px;
}

.tree-box {
  display: flex;
  height: 212px;
  border: 1px solid #bdbdbd;
  background: #fff;
}

.tree {
  flex: 1;
  min-width: 0;
  overflow: hidden;
}

.tree li {
  display: flex;
  align-items: center;
  height: 18px;
  margin-right: 8px;
  white-space: nowrap;
}

.tree label {
  display: flex;
  align-items: center;
}

.tree .l1 { padding-left: 21px; }
.tree .l2 { padding-left: 42px; }
.tree .l3 { padding-left: 62px; }

.tree .selected {
  background: #eff0f0;
}

.arr {
  flex: none;
  width: 21px;
  height: 8px;
}

.ico {
  width: 18px;
  height: 17px;
  margin-right: 4px;
}

.kana {
  font-size: 7px;
}

.tree .file {
  height: 12px;
}

.file .ico {
  width: 12px;
  height: 12px;
}

.scrollbar {
  width: 14px;
  display: flex;
  flex-direction: column;
  border-left: 1px solid #ccc;
}

.scrollbar button {
  height: 14px;
  display: flex;
  align-items: center;
  justify-content: center;
}

.scrollbar svg {
  width: 8px;
  height: 8px;
}

.track {
  flex: 1;
  padding-top: 55px;
  background: #dedede;
  border: solid #c4c4c4;
  border-width: 1px 0;
}

.thumb {
  height: 61px;
  background: #f8f8f8;
  border: solid #c4c4c4;
  border-width: 1px 0;
}

.splitter {
  height: 8px;
  margin: 0 103px;
  background: radial-gradient(#ccc 1px, transparent 1px) 0 0 / 3px 6px no-repeat;
  background-repeat: repeat-x;
}

.layer-tree {
  border: 1px solid #bdbdbd;
  background: #fff;
}

.layer-tree li {
  height: 17px;
  margin-right: 0;
  border-right: 4px solid #e2e2e2;
}

.layer-tree .arr {
  width: 23px;
}

.layer-tree .ico {
  width: 17px;
  margin: 0 4px 0 5px;
}

.swatch {
  width: 14px;
  height: 14px;
  margin: 0 4px 0 6px;
  background: #be9b57;
  border: 1px solid #8d7340;
}

.layer-tree b {
  font-weight: 600;
  text-decoration: underline;
}

/* map canvas */
.map {
  flex: 1;
  position: relative;
  margin-left: 6px;
  border: solid #bdbdbd;
  border-width: 0 1px 1px;
  background: #fff;
}

.canvas {
  width: 100%;
  height: 100%;
}

.map-label {
  font-family: "Noto Sans CJK JP", sans-serif;
  font-size: 13px;
  text-anchor: middle;
  fill: #111;
}

/* attribute table window */
.window {
  position: absolute;
  left: 67px;
  top: 129px;
  width: 366px;
  height: 301px;
  display: flex;
  flex-direction: column;
  background: #eff0f0;
  border: 2px solid #b9b9b9;
  border-top-width: 1px;
  box-shadow: 0 1px 5px rgba(0,0,0,.3);
}

.window-title {
  height: 21px;
  padding-left: 4px;
  gap: 5px;
}

.window-tools {
  display: flex;
  align-items: center;
  height: 29px;
  padding-left: 2px;
}

.window-tools .sep {
  margin: 0 3px 0 2px;
}

.more {
  margin-left: auto;
  padding-right: 6px;
  font-size: 11px;
  font-weight: bold;
}

.grid-box {
  flex: 1;
  border-top: 1px solid #bdbdbd;
  border-bottom: 1px solid #bdbdbd;
  background: linear-gradient(#eff0f0, #eff0f0) 0 0 / 100% 14px no-repeat, linear-gradient(#eff0f0, #eff0f0) 0 0 / 9px 100% no-repeat, #fff;
}

.grid {
  width: 112px;
  border-collapse: separate;
  border-spacing: 0;
  table-layout: fixed;
}

.num {
  width: 9px;
}

.grid th, .grid td {
  padding: 0;
  border: solid #c0c0c0;
  border-width: 0 1px 1px 0;
  font-weight: normal;
}

.grid thead th {
  height: 14px;
  background: linear-gradient(#fafafa, #eee);
}

.grid .blank {
  border-right: none;
}

.grid tbody th {
  height: 31px;
  background: #f6f6f6;
}

.grid td {
  padding-right: 2px;
  text-align: right;
  background: #fff;
}

.grid .alt td {
  background: #e8e6e2;
}

.window-foot {
  display: flex;
  align-items: center;
  height: 22px;
  padding: 0 1px;
  gap: 1px;
}

.filter-btn {
  display: flex;
  align-items: center;
  height: 21px;
  margin-right: auto;
  padding: 0 1px 0 3px;
  gap: 3px;
  background: #f9f9f9;
  border: 1px solid #c0c0c0;
  border-radius: 2px;
}

.filter-btn svg {
  width: 16px;
  height: 16px;
}

.filter-btn .tri {
  width: 7px;
  height: 7px;
  margin: 8px 0 0 -4px;
}

.view {
  width: 22px;
  height: 21px;
  display: flex;
  align-items: center;
  justify-content: center;
}

.view svg {
  width: 15px;
  height: 15px;
}

/* status bar */
.status {
  display: flex;
  align-items: center;
  height: 25px;
  padding: 0 4px 0 3px;
  white-space: nowrap;
}

.locator {
  width: 138px;
  padding-left: 4px;
  gap: 4px;
}

.locator svg {
  width: 10px;
  height: 10px;
}

.locator input {
  flex: 1;
  min-width: 0;
}

.locator input::placeholder {
  color: #888;
}

.message {
  flex: 1;
  margin-left: 5px;
}

.coord {
  width: 72px;
  margin-left: 2px;
  text-align: center;
}

.sb {
  width: 20px;
  margin: 0 4px 0 2px;
  display: flex;
  justify-content: center;
}

.sb svg {
  width: 17px;
  height: 17px;
}

.sb:last-child {
  margin: 0 0 0 12px;
}

.scale {
  width: 77px;
  margin-left: 2px;
}

.lock {
  margin-left: 6px;
  margin-right: 2px;
}

.status .spin, .status .scale {
  height: 18px;
}

.zoom {
  width: 72px;
  margin: 0 6px 0 2px;
}

.rot {
  width: 69px;
  margin: 0 5px 0 6px;
}

.render {
  display: flex;
  align-items: center;
  gap: 5px;
}

.crs {
  display: flex;
  align-items: center;
  gap: 1px;
  margin-left: 5px;
}

.crs svg {
  width: 16px;
  height: 16px;
}

.taskbar {
  height: 3px;
  background: linear-gradient(90deg, #3c3c3c 134px, #000 134px calc(100% - 64px), #2b3c46 calc(100% - 64px));
}
```
